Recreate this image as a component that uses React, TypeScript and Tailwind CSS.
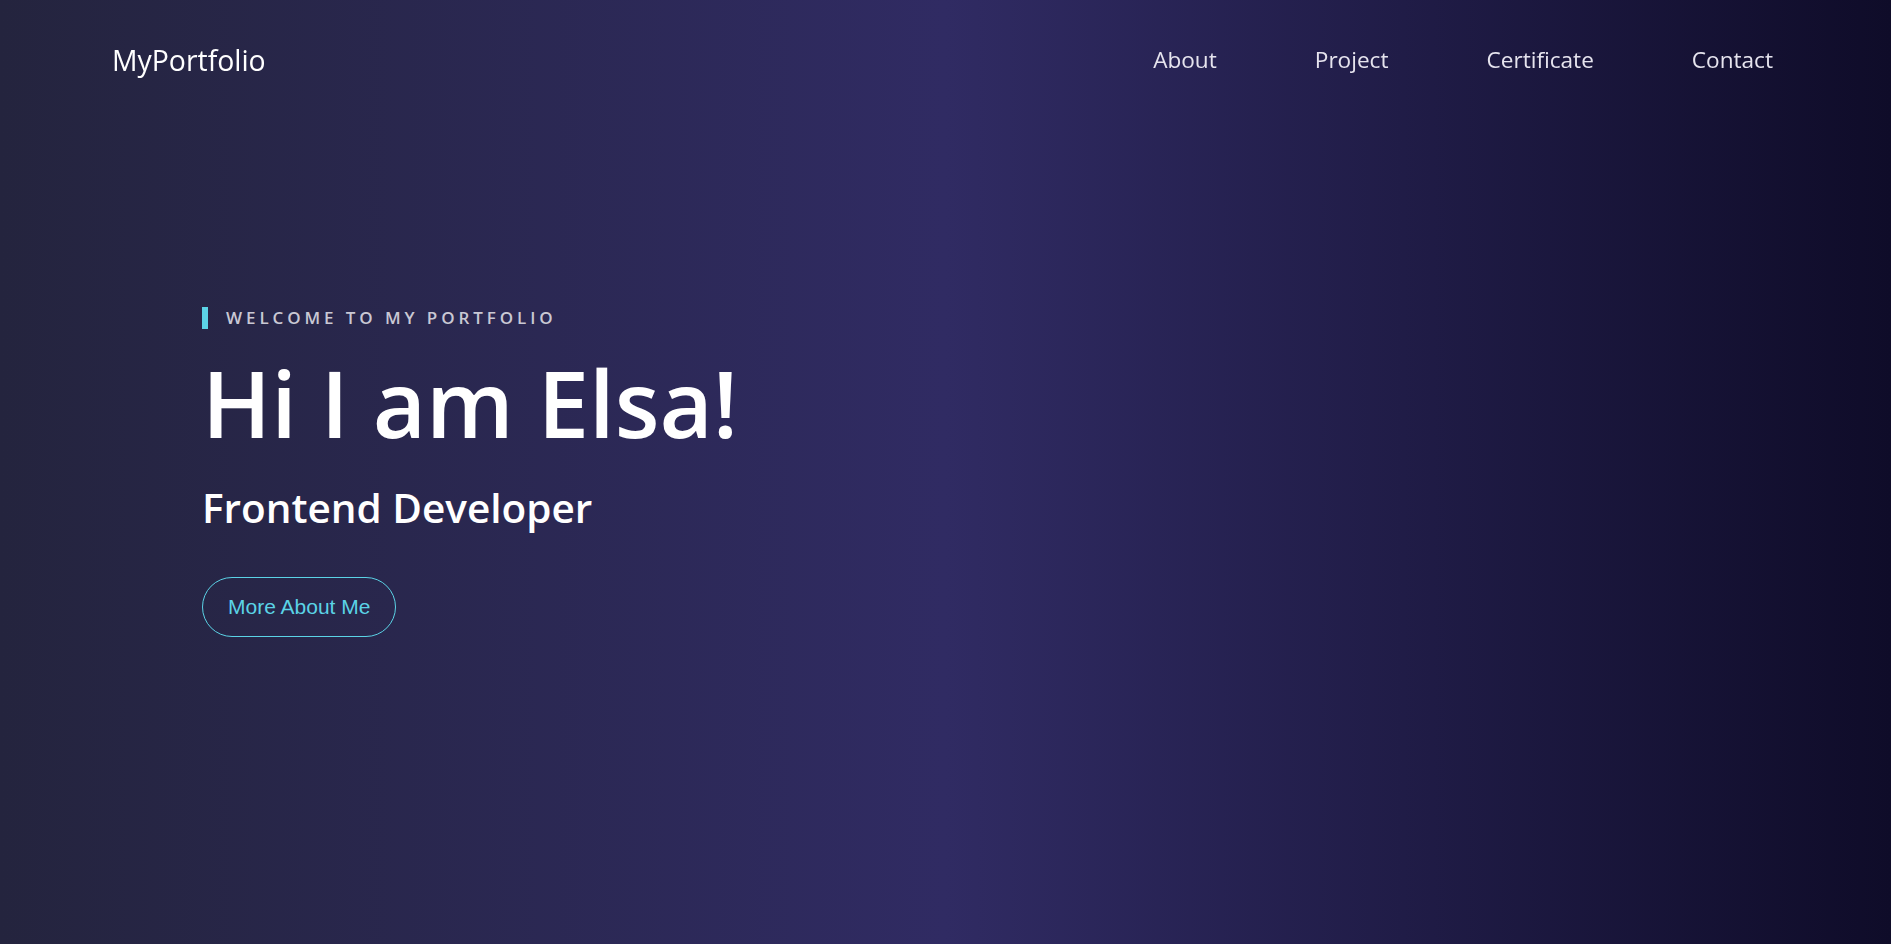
import React from "react";

const links = ["About", "Project", "Certificate", "Contact"];

export default function App() {
  return (
    <div className="min-h-screen w-full bg-[linear-gradient(to_right,#24243e,#302b63,#0f0c29)] font-['Segoe_UI','Open_Sans',sans-serif] text-white">
      <header className="fixed top-0 left-0 right-0 flex h-[120px] items-center justify-between pl-[112px] pr-[118px]">
        <div className="text-[28.4px] leading-[1.5]">MyPortfolio</div>
        <nav className="flex gap-[98px]">
          {links.map((l) => (
            <a key={l} href="#" className="text-[22.6px] leading-[1.5] text-[#e6e4ee]">
              {l}
            </a>
          ))}
        </nav>
      </header>

      <section className="flex min-h-screen flex-col justify-center pl-[202px]">
        <div className="flex flex-col items-start">
          <div className="border-l-[6px] border-[#5bd3e6] pl-[18px] text-[17px] leading-[22px] font-semibold tracking-[0.23em] text-[#c9c8d4]">
            WELCOME TO MY PORTFOLIO
          </div>
          <h1 className="mt-[28px] text-[92px] leading-none font-semibold">Hi I am Elsa!</h1>
          <h2 className="mt-[35px] text-[40.5px] leading-[1.2] font-semibold">Frontend Developer</h2>
          <button className="mt-[45px] rounded-full border border-[#5bd3e6] px-[25px] py-[17px] font-['Liberation_Sans',Arial,sans-serif] text-[21px] leading-[24px] text-[#5bd3e6]">
            More About Me
          </button>
        </div>
      </section>
    </div>
  );
}
